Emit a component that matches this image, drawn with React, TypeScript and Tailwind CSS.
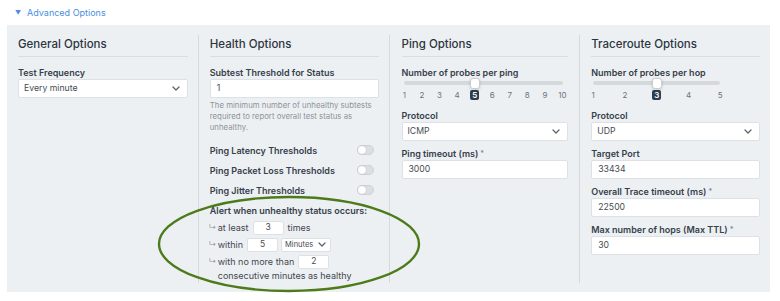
import type { ReactNode } from "react";

function Chevron() {
  return (
    <svg width="8" height="5" viewBox="0 0 8 5" className="shrink-0">
      <path d="M1 1l3 3 3-3" fill="none" stroke="#5b6570" strokeWidth="1.3" strokeLinecap="round" strokeLinejoin="round" />
    </svg>
  );
}

function Heading({ children }: { children: ReactNode }) {
  return (
    <div className="text-[11.5px] leading-[18px] font-medium text-[#2b3540] pb-[3px] border-b border-[#d9dde1]">
      {children}
    </div>
  );
}

function Label({ children, req, className = "" }: { children: ReactNode; req?: boolean; className?: string }) {
  return (
    <div className={`text-[9px] leading-[13px] font-semibold text-[#36404a] ${className}`}>
      {children}
      {req && <span className="text-[7px] align-top text-[#7b838b] ml-[2px]">*</span>}
    </div>
  );
}

function Select({ value, className = "" }: { value: string; className?: string }) {
  return (
    <div className={`h-[19px] bg-white border border-[#dde1e5] rounded-[2px] flex items-center justify-between pl-[5px] pr-[7px] text-[8.7px] text-[#454c53] ${className}`}>
      <span>{value}</span>
      <Chevron />
    </div>
  );
}

function Input({ value, className = "" }: { value: string; className?: string }) {
  return (
    <div className={`h-[19px] bg-white border border-[#dde1e5] rounded-[2px] flex items-center pl-[6px] text-[8.7px] text-[#454c53] ${className}`}>
      {value}
    </div>
  );
}

function Toggle() {
  return (
    <div className="w-[17px] h-[10px] rounded-full bg-[#dcdfe2] border border-[#cfd3d7] flex items-center pl-[0.5px]">
      <div className="w-[8px] h-[8px] rounded-full bg-white shadow-[0_0_1px_rgba(0,0,0,0.35)]" />
    </div>
  );
}

function Slider({
  count,
  active,
  trackW,
  cellsW,
  cellsMl,
  handleLeft,
}: {
  count: number;
  active: number;
  trackW: string;
  cellsW: string;
  cellsMl: string;
  handleLeft: string;
}) {
  const nums = Array.from({ length: count }, (_, i) => i + 1);
  return (
    <div>
      <div className="relative h-[11px] -mt-[1px]">
        <div className={`absolute left-[2px] top-[3px] h-[4px] rounded-full bg-[#d6d9dc] ${trackW}`} />
        <div
          className={`absolute top-0 w-[10px] h-[11px] rounded-[3px] bg-white border border-[#c9cdd1] shadow-[0_1px_3px_rgba(0,0,0,0.15)] ${handleLeft}`}
        />
      </div>
      <div className={`flex justify-between h-[12px] items-center ${cellsW} ${cellsMl}`}>
        {nums.map((n) =>
          n === active ? (
            <span key={n} className="w-[12px] flex justify-center">
              <span className="w-[9px] h-[10px] rounded-[2px] bg-[#2b3d4f] text-white text-[8px] font-semibold leading-[10px] text-center">
                {n}
              </span>
            </span>
          ) : (
            <span key={n} className="w-[12px] text-center text-[8px] text-[#6b737b] leading-[10px]">
              {n}
            </span>
          ),
        )}
      </div>
    </div>
  );
}

function SmallBox({ value }: { value: string }) {
  return (
    <div className="h-[14px] w-[31px] bg-white border border-[#dde1e5] rounded-[2px] flex items-center justify-center text-[8.5px] text-[#454c53]">
      {value}
    </div>
  );
}

function Arrow() {
  return <span className="w-[9px] text-[7.5px] text-[#8a9096] shrink-0">↳</span>;
}

export default function App() {
  return (
    <div
      className="relative w-[780px] h-[301px] bg-white overflow-hidden"
      style={{ fontFamily: "Inter, 'Liberation Sans', sans-serif" }}
    >
      <div className="h-[25px] flex items-center pl-[15px] text-[9px] text-[#4a8ee0]">
        <span className="text-[6px] mr-[6px]">▼</span>
        <span>Advanced Options</span>
      </div>

      <div className="ml-[7px] w-[763px] h-[267px] bg-[#edf0f3] grid grid-cols-4 pt-[10px] pb-[9px]">
        {/* General */}
        <div className="pl-[11px] pr-[10px]">
          <Heading>General Options</Heading>
          <Label className="mt-[9px]">Test Frequency</Label>
          <Select value="Every minute" />
        </div>

        {/* Health */}
        <div className="pl-[11px] pr-[10px] border-l border-[#d6dade]">
          <Heading>Health Options</Heading>
          <Label className="mt-[9px]">Subtest Threshold for Status</Label>
          <Input value="1" />
          <p className="mt-[2px] text-[7.8px] leading-[11px] text-[#8d9399]">
            The minimum number of unhealthy subtests required to report overall test status as unhealthy.
          </p>
          <div className="mt-[7px]">
            {["Ping Latency Thresholds", "Ping Packet Loss Thresholds", "Ping Jitter Thresholds"].map((t) => (
              <div key={t} className="h-[20px] flex items-center justify-between pr-[5px]">
                <Label>{t}</Label>
                <Toggle />
              </div>
            ))}
          </div>
          <Label className="mt-[4px] leading-[14px]">Alert when unhealthy status occurs:</Label>
          <div className="text-[9px] text-[#3f474f] -ml-[1px]">
            <div className="mt-[2px] h-[15px] flex items-center">
              <Arrow />
              <span className="mr-[4px]">at least</span>
              <SmallBox value="3" />
              <span className="ml-[4px]">times</span>
            </div>
            <div className="mt-[2px] h-[15px] flex items-center">
              <Arrow />
              <span className="mr-[4px]">within</span>
              <SmallBox value="5" />
              <div className="ml-[3px] h-[14px] w-[50px] bg-white border border-[#dde1e5] rounded-[2px] flex items-center justify-between pl-[3px] pr-[4px] text-[7.5px] text-[#454c53]">
                <span>Minutes</span>
                <Chevron />
              </div>
            </div>
            <div className="mt-[2px] h-[15px] flex items-center">
              <Arrow />
              <span className="mr-[4px]">with no more than</span>
              <SmallBox value="2" />
            </div>
            <div className="h-[14px] leading-[14px] pl-[9px]">consecutive minutes as healthy</div>
          </div>
        </div>

        {/* Ping */}
        <div className="pl-[12px] pr-[11px] border-l border-[#d6dade]">
          <Heading>Ping Options</Heading>
          <Label className="mt-[9px]">Number of probes per ping</Label>
          <Slider count={10} active={5} trackW="w-[159px]" cellsW="w-[170px]" cellsMl="-ml-[3px]" handleLeft="left-[68px]" />
          <Label className="mt-[8px]">Protocol</Label>
          <Select value="ICMP" />
          <Label className="mt-[6px]" req>
            Ping timeout (ms)
          </Label>
          <Input value="3000" />
        </div>

        {/* Traceroute */}
        <div className="pl-[11px] pr-[10px] border-l border-[#d6dade]">
          <Heading>Traceroute Options</Heading>
          <Label className="mt-[9px]">Number of probes per hop</Label>
          <Slider count={5} active={3} trackW="w-[127px]" cellsW="w-[139px]" cellsMl="-ml-[4px]" handleLeft="left-[61px]" />
          <Label className="mt-[8px]">Protocol</Label>
          <Select value="UDP" />
          <Label className="mt-[6px]">Target Port</Label>
          <Input value="33434" />
          <Label className="mt-[6px]" req>
            Overall Trace timeout (ms)
          </Label>
          <Input value="22500" />
          <Label className="mt-[6px]" req>
            Max number of hops (Max TTL)
          </Label>
          <Input value="30" />
        </div>
      </div>

      {/* annotation ellipse */}
      <svg className="absolute left-0 top-0 pointer-events-none" width="780" height="301">
        <ellipse cx="289" cy="244" rx="130" ry="47" fill="none" stroke="#4d7b1c" strokeWidth="2.4" />
      </svg>
    </div>
  );
}
